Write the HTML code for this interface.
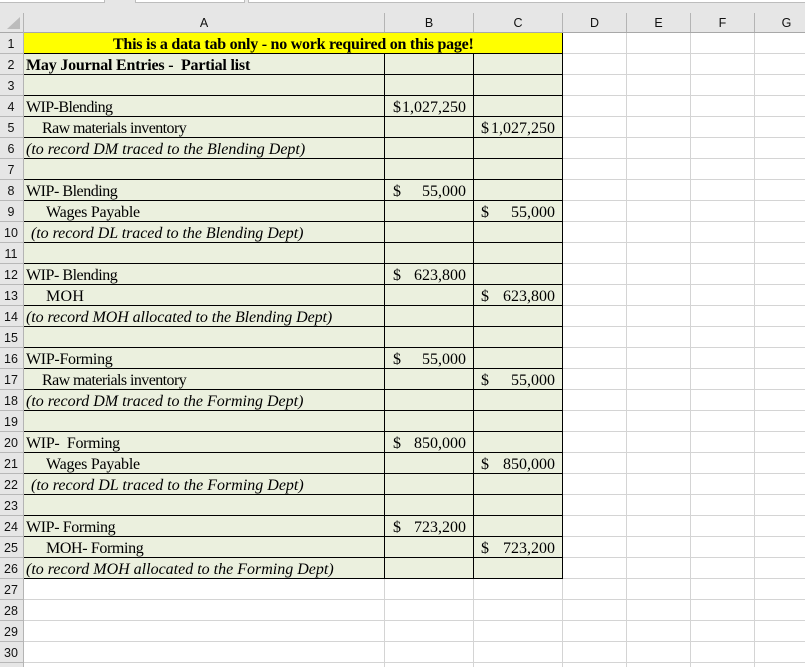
<!DOCTYPE html>
<html><head><meta charset="utf-8"><style>
html,body{margin:0;padding:0;background:#fff}
#p{position:relative;width:805px;height:667px;overflow:hidden;background:#fff}
#p div{position:absolute}
.h{background:#d4d4d4;left:24px;width:781px;height:1px}
.v{background:#d4d4d4;width:1px;top:33px;height:634px}
.k{background:#000}
.hs{background:#b8b8b8;left:0;width:23px;height:1px}
.cs{background:#b4b4b4;top:13px;width:1px;height:19px}
.l{font:12.5px/23px "Liberation Sans",sans-serif;color:#111;left:0;width:22px;text-align:center;height:21px}
.c{font:12.5px/21px "Liberation Sans",sans-serif;color:#111;top:13px;text-align:center;height:19px}
.t{font:16px/23px "Liberation Serif",serif;color:#000;white-space:pre;height:21px}
.i{font-style:italic}
.b{font-weight:bold}
.r{text-align:right;width:80px}
</style></head><body><div id="p">
<div style="left:0;top:0;width:805px;height:33px;background:#e6e6e6"></div>
<div style="left:0;top:0;width:104px;height:2px;background:#fff;border-bottom:1px solid #bdbdbd;border-right:1px solid #bdbdbd"></div>
<div style="left:135px;top:0;width:108px;height:2px;background:#fff;border:solid #bdbdbd;border-width:0 1px 1px 1px"></div>
<div style="left:248px;top:0;width:557px;height:2px;background:#fff;border-bottom:1px solid #bdbdbd;border-left:1px solid #bdbdbd"></div>
<div style="left:0;top:33px;width:23px;height:634px;background:#e6e6e6"></div>
<div style="left:0;top:32px;width:805px;height:1px;background:#a8a8a8"></div>
<div style="left:23px;top:13px;width:1px;height:654px;background:#b4b4b4"></div>
<svg style="position:absolute;left:7px;top:17px" width="14" height="13"><polygon points="13,0 13,12 0,12" fill="#bcbcbc"/></svg>

<div class="h" style="top:53px"></div><div class="h" style="top:74px"></div><div class="h" style="top:599px"></div><div class="h" style="top:620px"></div><div class="h" style="top:641px"></div><div class="h" style="top:662px"></div>
<div class="h" style="top:95px"></div><div class="h" style="top:116px"></div><div class="h" style="top:137px"></div><div class="h" style="top:158px"></div><div class="h" style="top:179px"></div><div class="h" style="top:200px"></div><div class="h" style="top:221px"></div><div class="h" style="top:242px"></div><div class="h" style="top:263px"></div><div class="h" style="top:284px"></div><div class="h" style="top:305px"></div><div class="h" style="top:326px"></div><div class="h" style="top:347px"></div><div class="h" style="top:368px"></div><div class="h" style="top:389px"></div><div class="h" style="top:410px"></div><div class="h" style="top:431px"></div><div class="h" style="top:452px"></div><div class="h" style="top:473px"></div><div class="h" style="top:494px"></div><div class="h" style="top:515px"></div><div class="h" style="top:536px"></div><div class="h" style="top:557px"></div><div class="h" style="top:578px"></div>
<div class="v" style="left:384px"></div><div class="v" style="left:473px"></div><div class="v" style="left:562px"></div><div class="v" style="left:626px"></div><div class="v" style="left:690px"></div><div class="v" style="left:754px"></div>

<div style="left:24px;top:33px;width:538px;height:20px;background:#ffff00"></div>
<div style="left:24px;top:54px;width:538px;height:524px;background:#ebf0de"></div>
<div class="k" style="left:384px;top:53px;width:1px;height:526px"></div><div class="k" style="left:473px;top:53px;width:1px;height:526px"></div><div class="k" style="left:562px;top:33px;width:1px;height:546px"></div>
<div class="k" style="left:24px;width:539px;height:1px;top:53px"></div><div class="k" style="left:24px;width:539px;height:1px;top:74px"></div><div class="k" style="left:24px;width:539px;height:1px;top:95px"></div><div class="k" style="left:24px;width:539px;height:1px;top:116px"></div><div class="k" style="left:24px;width:539px;height:1px;top:137px"></div><div class="k" style="left:24px;width:539px;height:1px;top:158px"></div><div class="k" style="left:24px;width:539px;height:1px;top:179px"></div><div class="k" style="left:24px;width:539px;height:1px;top:200px"></div><div class="k" style="left:24px;width:539px;height:1px;top:221px"></div><div class="k" style="left:24px;width:539px;height:1px;top:242px"></div><div class="k" style="left:24px;width:539px;height:1px;top:263px"></div><div class="k" style="left:24px;width:539px;height:1px;top:284px"></div><div class="k" style="left:24px;width:539px;height:1px;top:305px"></div><div class="k" style="left:24px;width:539px;height:1px;top:326px"></div><div class="k" style="left:24px;width:539px;height:1px;top:347px"></div><div class="k" style="left:24px;width:539px;height:1px;top:368px"></div><div class="k" style="left:24px;width:539px;height:1px;top:389px"></div><div class="k" style="left:24px;width:539px;height:1px;top:410px"></div><div class="k" style="left:24px;width:539px;height:1px;top:431px"></div><div class="k" style="left:24px;width:539px;height:1px;top:452px"></div><div class="k" style="left:24px;width:539px;height:1px;top:473px"></div><div class="k" style="left:24px;width:539px;height:1px;top:494px"></div><div class="k" style="left:24px;width:539px;height:1px;top:515px"></div><div class="k" style="left:24px;width:539px;height:1px;top:536px"></div><div class="k" style="left:24px;width:539px;height:1px;top:557px"></div><div class="k" style="left:24px;width:539px;height:1px;top:578px"></div>

<div class="cs" style="left:384px"></div><div class="cs" style="left:473px"></div><div class="cs" style="left:562px"></div><div class="cs" style="left:626px"></div><div class="cs" style="left:690px"></div><div class="cs" style="left:754px"></div>
<div class="c" style="left:24px;width:360px">A</div><div class="c" style="left:385px;width:88px">B</div><div class="c" style="left:474px;width:88px">C</div><div class="c" style="left:563px;width:63px">D</div><div class="c" style="left:627px;width:63px">E</div><div class="c" style="left:691px;width:63px">F</div><div class="c" style="left:755px;width:63px">G</div>

<div class="hs" style="top:53px"></div><div class="hs" style="top:74px"></div><div class="hs" style="top:95px"></div><div class="hs" style="top:116px"></div><div class="hs" style="top:137px"></div><div class="hs" style="top:158px"></div><div class="hs" style="top:179px"></div><div class="hs" style="top:200px"></div><div class="hs" style="top:221px"></div><div class="hs" style="top:242px"></div><div class="hs" style="top:263px"></div><div class="hs" style="top:284px"></div><div class="hs" style="top:305px"></div><div class="hs" style="top:326px"></div><div class="hs" style="top:347px"></div><div class="hs" style="top:368px"></div><div class="hs" style="top:389px"></div><div class="hs" style="top:410px"></div><div class="hs" style="top:431px"></div><div class="hs" style="top:452px"></div><div class="hs" style="top:473px"></div><div class="hs" style="top:494px"></div><div class="hs" style="top:515px"></div><div class="hs" style="top:536px"></div><div class="hs" style="top:557px"></div><div class="hs" style="top:578px"></div><div class="hs" style="top:599px"></div><div class="hs" style="top:620px"></div><div class="hs" style="top:641px"></div><div class="hs" style="top:662px"></div>

<div class="l" style="top:33px">1</div><div class="l" style="top:54px">2</div><div class="l" style="top:75px">3</div><div class="l" style="top:96px">4</div><div class="l" style="top:117px">5</div><div class="l" style="top:138px">6</div><div class="l" style="top:159px">7</div><div class="l" style="top:180px">8</div><div class="l" style="top:201px">9</div><div class="l" style="top:222px">10</div><div class="l" style="top:243px">11</div><div class="l" style="top:264px">12</div><div class="l" style="top:285px">13</div><div class="l" style="top:306px">14</div><div class="l" style="top:327px">15</div><div class="l" style="top:348px">16</div><div class="l" style="top:369px">17</div><div class="l" style="top:390px">18</div><div class="l" style="top:411px">19</div><div class="l" style="top:432px">20</div><div class="l" style="top:453px">21</div><div class="l" style="top:474px">22</div><div class="l" style="top:495px">23</div><div class="l" style="top:516px">24</div><div class="l" style="top:537px">25</div><div class="l" style="top:558px">26</div><div class="l" style="top:579px">27</div><div class="l" style="top:600px">28</div><div class="l" style="top:621px">29</div><div class="l" style="top:642px">30</div>

<div class="t b" style="left:113px;top:33px;letter-spacing:-.25px">This is a data tab only - no work required on this page!</div>
<div class="t b" style="left:26px;top:54px;letter-spacing:-.2px">May Journal Entries -  Partial list</div>
<div class="t" style="left:26px;top:96px;letter-spacing:-.57px">WIP-Blending</div>
<div class="t" style="left:42px;top:117px;letter-spacing:-.57px">Raw materials inventory</div>
<div class="t i" style="left:26px;top:138px">(to record DM traced to the Blending Dept)</div>
<div class="t" style="left:26px;top:180px;letter-spacing:-.46px">WIP- Blending</div>
<div class="t" style="left:46px;top:201px;letter-spacing:-.23px">Wages Payable</div>
<div class="t i" style="left:31px;top:222px;letter-spacing:-.05px">(to record DL traced to the Blending Dept)</div>
<div class="t" style="left:26px;top:264px;letter-spacing:-.46px">WIP- Blending</div>
<div class="t" style="left:46px;top:285px;letter-spacing:.3px">MOH</div>
<div class="t i" style="left:26px;top:306px;letter-spacing:-.07px">(to record MOH allocated to the Blending Dept)</div>
<div class="t" style="left:26px;top:348px;letter-spacing:-.3px">WIP-Forming</div>
<div class="t" style="left:42px;top:369px;letter-spacing:-.57px">Raw materials inventory</div>
<div class="t i" style="left:26px;top:390px">(to record DM traced to the Forming Dept)</div>
<div class="t" style="left:26px;top:432px;letter-spacing:-.3px">WIP-  Forming</div>
<div class="t" style="left:46px;top:453px;letter-spacing:-.23px">Wages Payable</div>
<div class="t i" style="left:31px;top:474px">(to record DL traced to the Forming Dept)</div>
<div class="t" style="left:26px;top:516px;letter-spacing:-.38px">WIP- Forming</div>
<div class="t" style="left:46px;top:537px;letter-spacing:-.37px">MOH- Forming</div>
<div class="t i" style="left:26px;top:558px">(to record MOH allocated to the Forming Dept)</div>

<div class="t" style="left:393px;top:96px">$</div><div class="t r" style="left:386px;top:96px">1,027,250</div>
<div class="t" style="left:481px;top:117px">$</div><div class="t r" style="left:475px;top:117px">1,027,250</div>
<div class="t" style="left:393px;top:180px">$</div><div class="t r" style="left:386px;top:180px">55,000</div>
<div class="t" style="left:481px;top:201px">$</div><div class="t r" style="left:475px;top:201px">55,000</div>
<div class="t" style="left:393px;top:264px">$</div><div class="t r" style="left:386px;top:264px">623,800</div>
<div class="t" style="left:481px;top:285px">$</div><div class="t r" style="left:475px;top:285px">623,800</div>
<div class="t" style="left:393px;top:348px">$</div><div class="t r" style="left:386px;top:348px">55,000</div>
<div class="t" style="left:481px;top:369px">$</div><div class="t r" style="left:475px;top:369px">55,000</div>
<div class="t" style="left:393px;top:432px">$</div><div class="t r" style="left:386px;top:432px">850,000</div>
<div class="t" style="left:481px;top:453px">$</div><div class="t r" style="left:475px;top:453px">850,000</div>
<div class="t" style="left:393px;top:516px">$</div><div class="t r" style="left:386px;top:516px">723,200</div>
<div class="t" style="left:481px;top:537px">$</div><div class="t r" style="left:475px;top:537px">723,200</div>
</div></body></html>
